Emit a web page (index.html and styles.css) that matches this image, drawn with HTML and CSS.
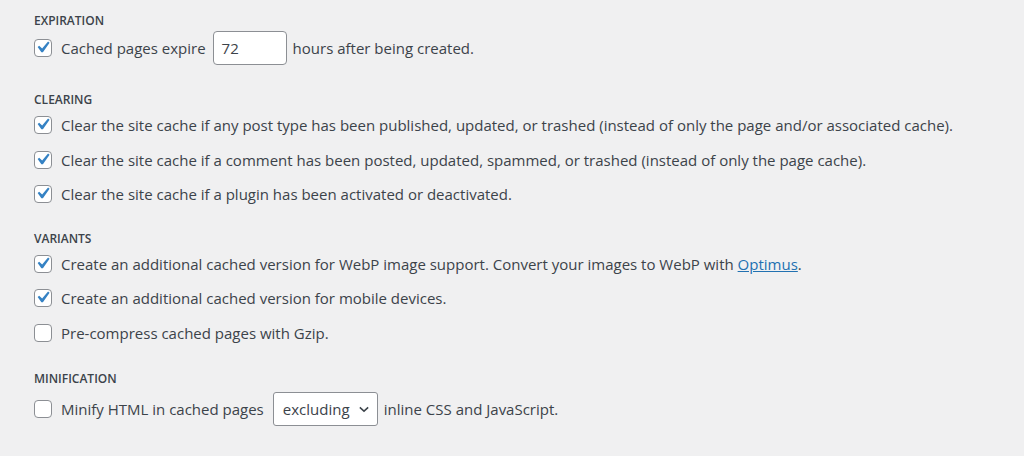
FILE: index.html
```html
<!DOCTYPE html>
<html lang="en">
<head>
    <meta charset="UTF-8">
    <title>Cache Enabler Settings</title>
    <link rel="stylesheet" href="styles.css">
</head>
<body>
    <div id="settings">
        <div class="section section-expiration">
            <h3>Expiration</h3>
            <label class="row row-tall">
                <span class="box"><svg viewBox="0 0 20 20"><path d="M14.83 4.89l1.34.94-5.81 8.38H9.02L5.78 9.67l1.34-1.25 2.57 2.4z"/></svg></span>
                <span class="text">Cached pages expire</span>
                <span class="text-input">72</span>
                <span class="text">hours after being created.</span>
            </label>
        </div>

        <div class="section">
            <h3>Clearing</h3>
            <label class="row">
                <span class="box"><svg viewBox="0 0 20 20"><path d="M14.83 4.89l1.34.94-5.81 8.38H9.02L5.78 9.67l1.34-1.25 2.57 2.4z"/></svg></span>
                <span class="text">Clear the site cache if any post type has been published, updated, or trashed (instead of only the page and/or associated cache).</span>
            </label>
            <label class="row">
                <span class="box"><svg viewBox="0 0 20 20"><path d="M14.83 4.89l1.34.94-5.81 8.38H9.02L5.78 9.67l1.34-1.25 2.57 2.4z"/></svg></span>
                <span class="text">Clear the site cache if a comment has been posted, updated, spammed, or trashed (instead of only the page cache).</span>
            </label>
            <label class="row">
                <span class="box"><svg viewBox="0 0 20 20"><path d="M14.83 4.89l1.34.94-5.81 8.38H9.02L5.78 9.67l1.34-1.25 2.57 2.4z"/></svg></span>
                <span class="text">Clear the site cache if a plugin has been activated or deactivated.</span>
            </label>
        </div>

        <div class="section section-variants">
            <h3>Variants</h3>
            <label class="row">
                <span class="box"><svg viewBox="0 0 20 20"><path d="M14.83 4.89l1.34.94-5.81 8.38H9.02L5.78 9.67l1.34-1.25 2.57 2.4z"/></svg></span>
                <span class="text">Create an additional cached version for WebP image support. Convert your images to WebP with <a href="#">Optimus</a>.</span>
            </label>
            <label class="row">
                <span class="box"><svg viewBox="0 0 20 20"><path d="M14.83 4.89l1.34.94-5.81 8.38H9.02L5.78 9.67l1.34-1.25 2.57 2.4z"/></svg></span>
                <span class="text">Create an additional cached version for mobile devices.</span>
            </label>
            <label class="row">
                <span class="box"></span>
                <span class="text">Pre-compress cached pages with Gzip.</span>
            </label>
        </div>

        <div class="section">
            <h3>Minification</h3>
            <label class="row row-select">
                <span class="box"></span>
                <span class="text">Minify HTML in cached pages</span>
                <span class="select">excluding<svg viewBox="0 0 12 8"><path d="M1 1.5l5 4.5 5-4.5"/></svg></span>
                <span class="text">inline CSS and JavaScript.</span>
            </label>
        </div>
    </div>
</body>
</html>
```

FILE: styles.css
```css
body {
    margin: 0;
    background: #f0f0f1;
    color: #3c434a;
    font-family: "Segoe UI", "Open Sans", sans-serif;
    font-size: 15px;
}
#settings {
    padding: 13px 0 0 34px;
}
.section {
    margin-bottom: 19px;
}
.section-expiration {
    margin-bottom: 25px;
}
.section-variants {
    margin-bottom: 21px;
}
h3 {
    margin: 0;
    height: 16px;
    line-height: 16px;
    font-size: 12px;
    font-weight: 600;
    text-transform: uppercase;
    color: #3c434a;
}
.row {
    display: flex;
    align-items: center;
    height: 34.5px;
}
.row-tall {
    height: 38px;
}
.row-select {
    height: 46px;
    margin-top: -1px;
}
.text {
    white-space: nowrap;
}
.box {
    width: 16px;
    height: 16px;
    margin-right: 9px;
    border: 1px solid #8c8f94;
    border-radius: 4px;
    background: #fff;
    flex-shrink: 0;
}
.box svg {
    display: block;
    width: 23px;
    height: 23px;
    margin: -4px 0 0 -4px;
}
.box path {
    fill: #3582c4;
}
.text-input {
    box-sizing: border-box;
    width: 74px;
    height: 34px;
    line-height: 32px;
    margin: 0 6px 0 7px;
    padding: 0 8px;
    border: 1px solid #8c8f94;
    border-radius: 4px;
    background: #fff;
}
.select {
    display: flex;
    align-items: center;
    justify-content: space-between;
    box-sizing: border-box;
    width: 105px;
    height: 34px;
    margin: 0 6px 0 9px;
    padding: 0 8px 0 9px;
    border: 1px solid #8c8f94;
    border-radius: 3px;
    background: #fff;
}
.select svg {
    width: 10px;
    height: 7px;
}
.select path {
    fill: none;
    stroke: #3c434a;
    stroke-width: 1.8;
}
a {
    color: #2271b1;
}
```
